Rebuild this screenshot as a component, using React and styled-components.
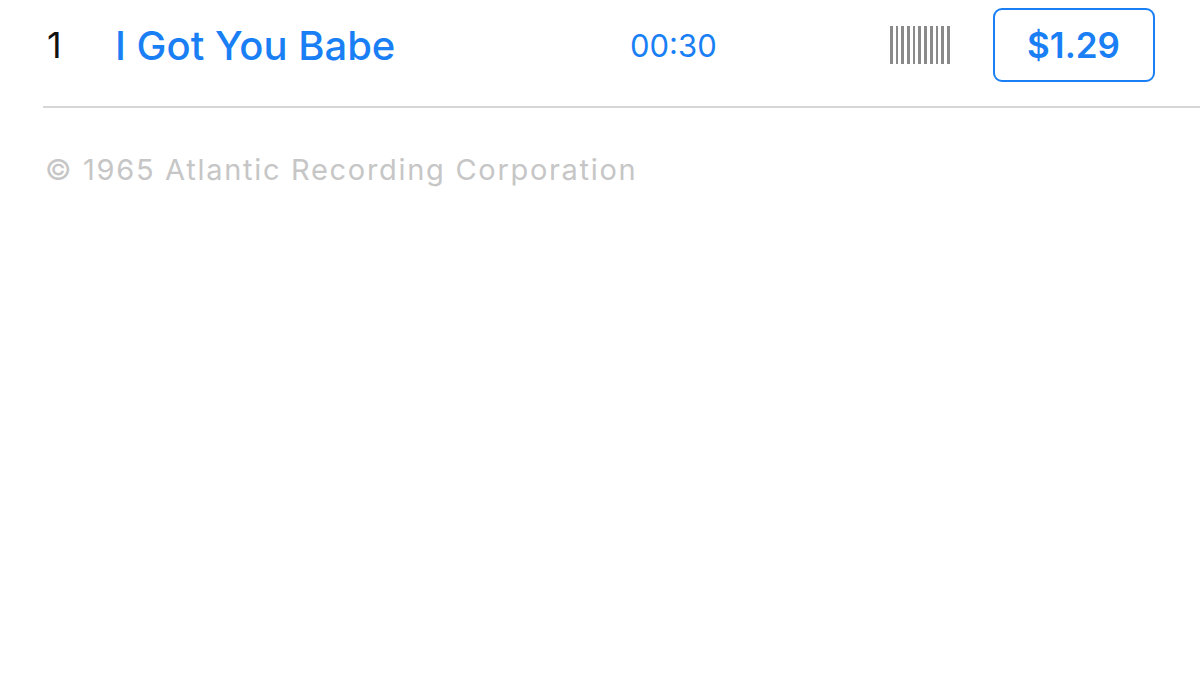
import styled, { createGlobalStyle } from "styled-components";

const GlobalStyle = createGlobalStyle`
    html, body {
        margin: 0;
        padding: 0;
        background: #fff;
    }
    body {
        font-family: Inter, "Liberation Sans", Arial, sans-serif;
    }
`;

export default function App() {
    return (
        <Page>
            <GlobalStyle />
            <TrackRow>
                <TrackNumber>1</TrackNumber>
                <TrackTitle>I Got You Babe</TrackTitle>
                <Duration>00:30</Duration>
                <PreviewIcon aria-label="preview">
                    {Array.from({ length: 11 }).map((_, i) => (
                        <Bar key={i} />
                    ))}
                </PreviewIcon>
                <PriceButton>$1.29</PriceButton>
            </TrackRow>
            <Copyright>© 1965 Atlantic Recording Corporation</Copyright>
        </Page>
    );
}

const Page = styled.div`
    width: 1200px;
    height: 675px;
    padding-left: 43px;
    box-sizing: border-box;
    overflow: hidden;
`;

const TrackRow = styled.div`
    display: flex;
    align-items: center;
    padding: 8px 44px 24px 0;
    border-bottom: 2px solid #d6d6d6;
`;

const TrackNumber = styled.div`
    width: 72px;
    padding-left: 4px;
    box-sizing: border-box;
    font-size: 36px;
    color: #111;
`;

const TrackTitle = styled.div`
    width: 515px;
    font-size: 40px;
    font-weight: 500;
    color: #1a7ff5;
`;

const Duration = styled.div`
    width: 260px;
    font-size: 31px;
    color: #1a7ff5;
`;

const PreviewIcon = styled.div`
    display: flex;
    gap: 3px;
    height: 38px;
    margin-right: 43px;
`;

const Bar = styled.span`
    width: 2.7px;
    height: 100%;
    background: #8a8a8a;
`;

const PriceButton = styled.button`
    width: 162px;
    height: 74px;
    border: 2px solid #1a7ff5;
    border-radius: 9px;
    background: #fff;
    color: #1a7ff5;
    font-family: Inter, "Liberation Sans", Arial, sans-serif;
    font-size: 35px;
    font-weight: 600;
    padding: 0;
`;

const Copyright = styled.div`
    margin-top: 44px;
    padding-left: 2px;
    font-size: 29px;
    letter-spacing: 1.7px;
    color: #c6c6c6;
`;
